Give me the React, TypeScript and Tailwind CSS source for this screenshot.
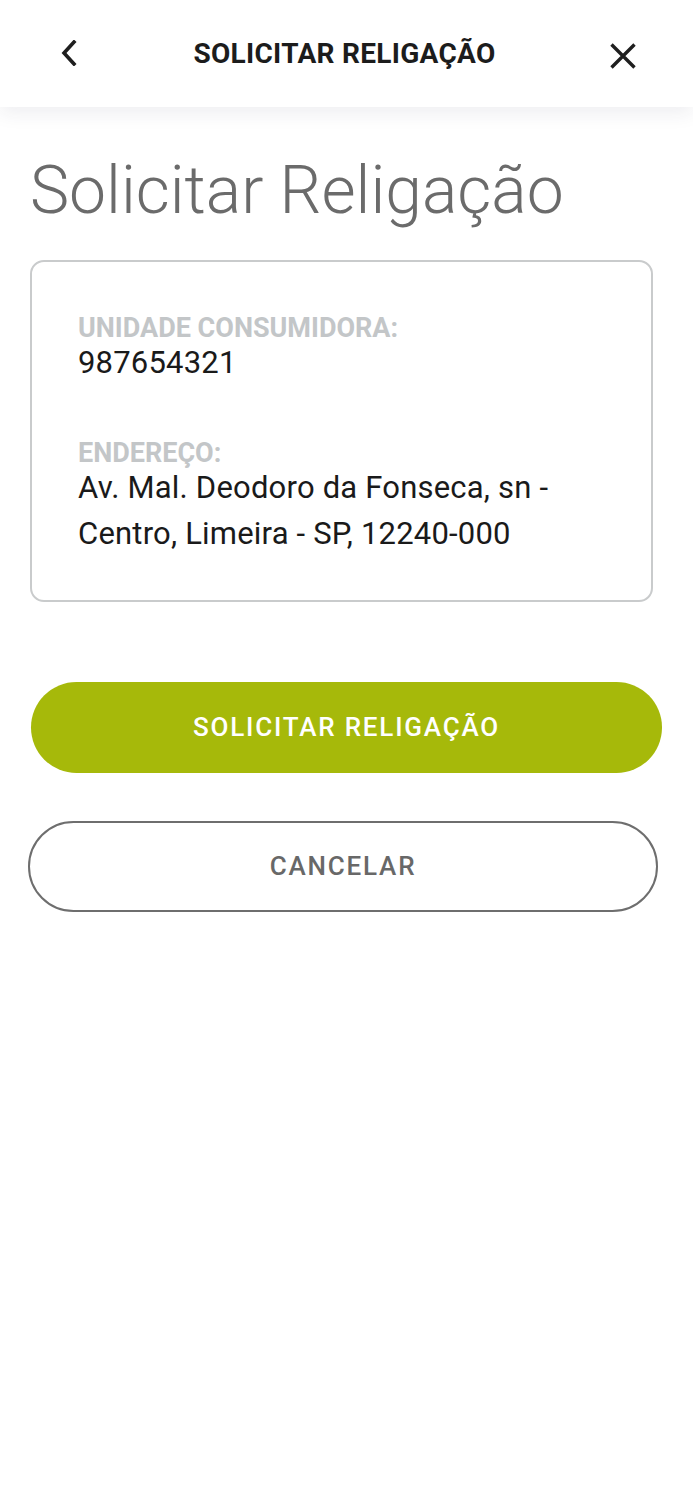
import React from 'react';

const ChevronLeft = () => (
  <svg width="16" height="26" viewBox="0 0 16 26" fill="none">
    <path d="M13 2 L3 13 L13 24" stroke="#1f1f1f" strokeWidth="3.6" strokeLinecap="square" />
  </svg>
);

const CloseIcon = () => (
  <svg width="26" height="26" viewBox="0 0 26 26" fill="none">
    <path d="M1.5 1.5 L24.5 24.5 M24.5 1.5 L1.5 24.5" stroke="#1f1f1f" strokeWidth="3.4" />
  </svg>
);

const InfoRow: React.FC<{ label: string; children: React.ReactNode }> = ({ label, children }) => (
  <div className="flex flex-col">
    <span className="text-[27px] font-bold leading-[27px] text-[#c3c6c8]">{label}</span>
    <span className="-mt-[2px] text-[31px] leading-[46px] tracking-[0.2px] text-[#1a1a1a]">{children}</span>
  </div>
);

export default function App() {
  return (
    <div className="min-h-[1500px] bg-white font-['Roboto',sans-serif]">
      <header className="relative z-10 flex h-[107px] items-center justify-between bg-white pl-[61px] pr-[55px] shadow-[0_6px_18px_rgba(40,40,80,0.08)]">
        <button className="flex h-[30px] w-[20px] items-center pb-[2px]">
          <ChevronLeft />
        </button>
        <h1 className="text-[28px] font-bold tracking-[0.3px] text-[#1c1c1c]">SOLICITAR RELIGAÇÃO</h1>
        <button className="flex h-[30px] w-[30px] items-center justify-center pt-[4px]">
          <CloseIcon />
        </button>
      </header>

      <main className="px-[30px] pt-[44px]">
        <h2 className="text-[66px] font-light leading-[80px] text-[#6b6b6b]">Solicitar Religação</h2>

        <div className="mt-[29px] mr-[10px] flex flex-col gap-[54px] rounded-[14px] border-2 border-[#c9cbcc] px-[46px] pt-[53px] pb-[43px]">
          <InfoRow label="UNIDADE CONSUMIDORA:">987654321</InfoRow>
          <InfoRow label="ENDEREÇO:">
            Av. Mal. Deodoro da Fonseca, sn -<br />Centro, Limeira - SP, 12240-000
          </InfoRow>
        </div>

        <div className="mt-[80px] flex flex-col gap-[48px]">
          <button className="ml-px flex h-[91px] w-[631px] items-center justify-center rounded-full bg-[#a6b90a] text-[26px] font-medium tracking-[1.8px] text-white">
            SOLICITAR RELIGAÇÃO
          </button>
          <button className="-ml-[2px] flex h-[91px] w-[630px] items-center justify-center rounded-full border-2 border-[#6e6e6e] text-[26px] font-medium tracking-[1.8px] text-[#686868]">
            CANCELAR
          </button>
        </div>
      </main>
    </div>
  );
}
